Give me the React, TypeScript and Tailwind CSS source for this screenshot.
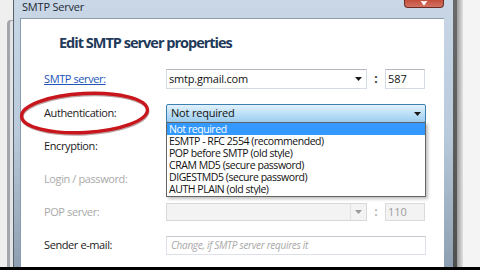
import React from "react";

const font = "font-['Open_Sans',sans-serif]";

function Caret({ color = "#1a1a1a" }: { color?: string }) {
  return (
    <svg width="7" height="4" viewBox="0 0 7 4">
      <path d="M0 0h7L3.5 4z" fill={color} />
    </svg>
  );
}

function Label({ children, muted }: { children: React.ReactNode; muted?: boolean }) {
  return (
    <div
      className={`w-[122px] shrink-0 text-[11px] tracking-[-0.4px] ${
        muted ? "text-[#a9a9a9]" : "text-[#1b1b1b]"
      }`}
    >
      {children}
    </div>
  );
}

function Colon({ muted }: { muted?: boolean }) {
  return (
    <div
      className={`flex w-[18px] justify-center text-[12px] font-bold ${
        muted ? "text-[#b8b8b8]" : "text-[#333]"
      }`}
    >
      :
    </div>
  );
}

const authOptions = [
  "Not required",
  "ESMTP - RFC 2554 (recommended)",
  "POP before SMTP (old style)",
  "CRAM MD5 (secure password)",
  "DIGESTMD5 (secure password)",
  "AUTH PLAIN (old style)",
];

export default function App() {
  return (
    <div className={`relative flex h-[270px] w-[480px] flex-col overflow-hidden bg-[#eeeeee] ${font}`}>
      <div className="flex h-[267px]">
        {/* window behind, left */}
        <div className="flex w-[13px] shrink-0 flex-col bg-[#efefef]">
          <div className="ml-[7px] mt-[20px] flex-1 rounded-tl-[4px] border-l-[3px] border-t border-[#a3a7ab] bg-[#e2e4e6]" />
        </div>

        {/* dialog */}
        <div className="flex w-[440px] shrink-0 flex-col border-l border-[#56616c] bg-gradient-to-b from-[#c9d7e6] via-[#b9cadb] to-[#8e9fb1]">
          <div className="flex h-[18px] shrink-0 items-start">
            <div className="pl-[8px] pt-[1px] text-[11px] leading-[12px] text-[#1e2a36] tracking-[-0.2px]">
              SMTP Server
            </div>
            <div className="ml-auto mr-[9px] flex h-[8px] w-[40px] items-end justify-center rounded-b-[4px] border border-t-0 border-[#6e2a24] bg-gradient-to-b from-[#c54d3d] to-[#d27363]">
              <svg width="10" height="6" viewBox="0 0 10 6">
                <path d="M1 -2 L6 3.5 M9 -2 L4 3.5" stroke="#fff" strokeWidth="2" />
              </svg>
            </div>
          </div>

          <div className="flex flex-1 pl-[6px] pr-[9px]">
            <div className="flex flex-1 flex-col border-l border-t border-[#8a9cb0] bg-white pl-[23px]">
              <div className="ml-[15px] mt-[14px] text-[14.5px] font-bold leading-[20px] tracking-[-1px] text-[#1f3a5a]">
                Edit SMTP server properties
              </div>

              {/* SMTP server */}
              <div className="mt-[16px] flex h-[20px] items-center">
                <Label>
                  <span className="text-[#2255b8] underline">SMTP server:</span>
                </Label>
                <div className="flex h-[20px] w-[201px] items-center border border-[#d5dbe3] border-t-[#b3b8bf] pl-[2px] pr-[4px]">
                  <span className="flex-1 text-[11px] tracking-[-0.2px] text-[#111]">smtp.gmail.com</span>
                  <Caret />
                </div>
                <Colon />
                <div className="flex h-[20px] w-[40px] items-center border border-[#d5dbe3] border-t-[#b3b8bf] pl-[2px] text-[11px] text-[#111]">
                  587
                </div>
              </div>

              {/* Authentication */}
              <div className="mt-[15px] flex h-[19px] items-center">
                <Label>Authentication:</Label>
                <div className="relative h-[19px] w-[260px]">
                  <div className="flex h-[19px] items-center rounded-[2px] border border-[#3c7fb1] bg-gradient-to-b from-[#e2f1fc] via-[#bde0f7] to-[#9ccdef] pl-[4px] pr-[4px]">
                    <span className="flex-1 text-[11px] tracking-[-0.2px] text-[#111]">Not required</span>
                    <Caret />
                  </div>
                  <div className="absolute left-0 top-[18px] z-10 w-[260px] border border-[#646464] bg-white shadow-[2px_2px_3px_rgba(0,0,0,0.25)]">
                    {authOptions.map((o, i) => (
                      <div
                        key={o}
                        className={`h-[12px] overflow-hidden pl-[2px] text-[10.5px] leading-[12px] tracking-[-0.45px] ${
                          i === 0 ? "bg-[#3399ff] text-white" : "text-[#111]"
                        }`}
                      >
                        {o}
                      </div>
                    ))}
                    <div className="h-[1px]" />
                  </div>
                </div>
              </div>

              {/* Encryption */}
              <div className="mt-[14px] flex h-[19px] items-center">
                <Label>Encryption:</Label>
                <div className="h-[19px] w-[260px] border border-[#c8c8c8] bg-[#f0f0f0]" />
              </div>

              {/* Login */}
              <div className="mt-[14px] flex h-[19px] items-center">
                <Label muted>Login / password:</Label>
                <div className="h-[19px] w-[260px] border border-[#dadada] bg-[#f4f4f4]" />
              </div>

              {/* POP server */}
              <div className="mt-[14px] flex h-[18px] items-center">
                <Label muted>POP server:</Label>
                <div className="flex h-[18px] w-[201px] items-center border border-[#d8d8d8] bg-[#f3f3f3] pr-[4px]">
                  <div className="flex-1" />
                  <div className="flex h-full items-center border-l border-[#e2e2e2] pl-[4px]">
                    <Caret color="#9a9a9a" />
                  </div>
                </div>
                <Colon muted />
                <div className="flex h-[18px] w-[40px] items-center border border-[#dadada] bg-[#f3f3f3] pl-[2px] text-[11px] text-[#9c9c9c]">
                  110
                </div>
              </div>

              {/* Sender e-mail */}
              <div className="mt-[15px] flex h-[19px] items-center">
                <Label>Sender e-mail:</Label>
                <div className="flex h-[19px] w-[260px] items-center border border-[#dde2e8] border-t-[#c5cad0] pl-[4px] text-[10px] italic tracking-[-0.3px] text-[#a8a8a8]">
                  Change, if SMTP server requires it
                </div>
              </div>
            </div>
          </div>
        </div>

        {/* right side */}
        <div className="flex flex-1">
          <div className="w-[4px] bg-gradient-to-b from-[#6a6a6a] to-[#505050]" />
          <div className="w-[6px] bg-gradient-to-r from-[#9c9c9c] to-[#e2e2e2]" />
          <div className="flex-1 bg-[#f4f4f4]" />
        </div>
      </div>
      <div className="h-[3px] bg-black" />

      {/* annotation ellipse */}
      <svg className="pointer-events-none absolute left-0 top-0" width="480" height="270">
        <ellipse cx="85" cy="114.5" rx="63" ry="19.5" transform="rotate(-3 85 114)" fill="none" stroke="rgba(60,0,0,0.35)" strokeWidth="3" />
        <ellipse cx="84.5" cy="113" rx="63" ry="19.5" transform="rotate(-3 84.5 113)" fill="none" stroke="#c8161c" strokeWidth="3.4" />
      </svg>

      {/* mouse pointer */}
      <svg className="pointer-events-none absolute left-[359px] top-[132px]" width="14" height="20" viewBox="0 0 14 20">
        <path d="M1 1 L1 16 L4.5 12.5 L7 18 L9.5 17 L7 11.5 L12 11.5 Z" fill="#fff" stroke="#555" strokeWidth="1" strokeLinejoin="round" />
      </svg>
    </div>
  );
}
